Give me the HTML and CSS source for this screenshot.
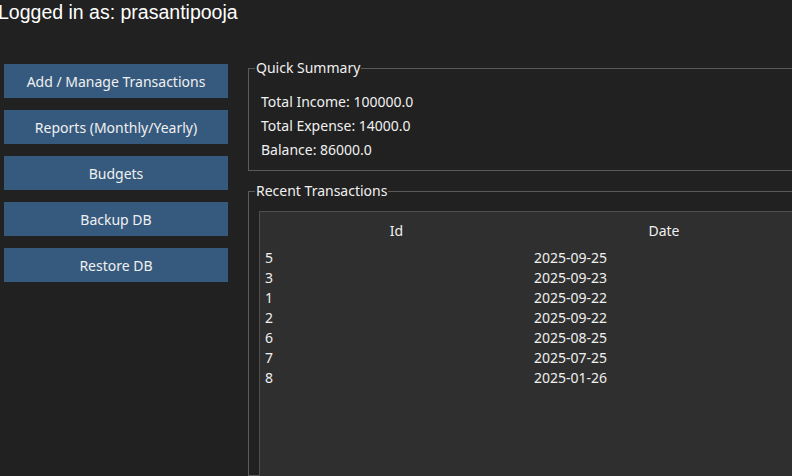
FILE: index.html
```html
<!DOCTYPE html>
<html>
<head>
<meta charset="utf-8">
<link rel="stylesheet" href="styles.css">
</head>
<body>
<div class="app">
  <div class="header">Logged in as: prasantipooja</div>
  <div class="main">
    <div class="sidebar">
      <button class="btn">Add / Manage Transactions</button>
      <button class="btn">Reports (Monthly/Yearly)</button>
      <button class="btn">Budgets</button>
      <button class="btn">Backup DB</button>
      <button class="btn">Restore DB</button>
    </div>
    <div class="content">
      <fieldset class="group summary">
        <legend>Quick Summary</legend>
        <div class="line">Total Income: 100000.0</div>
        <div class="line">Total Expense: 14000.0</div>
        <div class="line">Balance: 86000.0</div>
      </fieldset>
      <fieldset class="group recent">
        <legend>Recent Transactions</legend>
        <div class="tablebox">
          <table class="tx">
            <thead>
              <tr><th class="c-id">Id</th><th class="c-date">Date</th></tr>
            </thead>
            <tbody>
              <tr><td>5</td><td>2025-09-25</td></tr>
              <tr><td>3</td><td>2025-09-23</td></tr>
              <tr><td>1</td><td>2025-09-22</td></tr>
              <tr><td>2</td><td>2025-09-22</td></tr>
              <tr><td>6</td><td>2025-08-25</td></tr>
              <tr><td>7</td><td>2025-07-25</td></tr>
              <tr><td>8</td><td>2025-01-26</td></tr>
            </tbody>
          </table>
        </div>
      </fieldset>
    </div>
  </div>
</div>
</body>
</html>
```

FILE: styles.css
```css
html, body {
  margin: 0;
  padding: 0;
  background: #212121;
  overflow: hidden;
}
body {
  width: 792px;
  height: 476px;
  color: #f0f0f0;
  font-family: "Noto Sans", "Open Sans", sans-serif;
  font-size: 14px;
}
.app {
  display: flex;
  flex-direction: column;
  height: 476px;
}
.header {
  font-family: "Liberation Sans", Arial, sans-serif;
  font-size: 19.5px;
  line-height: 25px;
  height: 28px;
  margin-left: -2px;
  color: #ffffff;
}
.main {
  display: flex;
  flex: 1;
  min-height: 0;
  padding-left: 4px;
  gap: 20px;
}
.sidebar {
  display: flex;
  flex-direction: column;
  gap: 12px;
  padding-top: 36px;
  width: 224px;
  flex: none;
}
.btn {
  height: 34px;
  border: none;
  background: #365a7e;
  color: #f0f0f0;
  font-family: inherit;
  font-size: 14px;
  padding: 0;
  margin: 0;
}
.content {
  display: flex;
  flex-direction: column;
  padding-top: 32px;
  width: 600px;
  flex: none;
  min-height: 0;
}
.group {
  margin: 0;
  border: 1px solid #5a5a5a;
  min-width: 0;
}
.group legend {
  font-size: 14px;
  line-height: 16px;
  padding: 0 1px;
}
.summary {
  padding: 14px 12px 8px 12px;
}
.summary legend {
  margin-left: -6px;
}
.line {
  line-height: 24px;
}
.recent {
  margin-top: 12px;
  padding: 12px 10px 0 10px;
  flex: 1;
  min-height: 0;
}
.recent legend {
  margin-left: -4px;
}
.tablebox {
  background: #2f2f2f;
  border-left: 1px solid #4f4f4f;
  border-top: 1px solid #4f4f4f;
  height: 300px;
}
.tx {
  border-collapse: collapse;
  font-size: 14px;
}
.tx th {
  font-weight: normal;
  height: 36px;
  text-align: center;
  padding: 0;
}
.tx th.c-id { width: 265px; padding-left: 4px; }
.tx th.c-date { width: 270px; }
.tx td {
  height: 20px;
  line-height: 20px;
  padding: 0 0 0 5px;
  text-align: left;
}
```
